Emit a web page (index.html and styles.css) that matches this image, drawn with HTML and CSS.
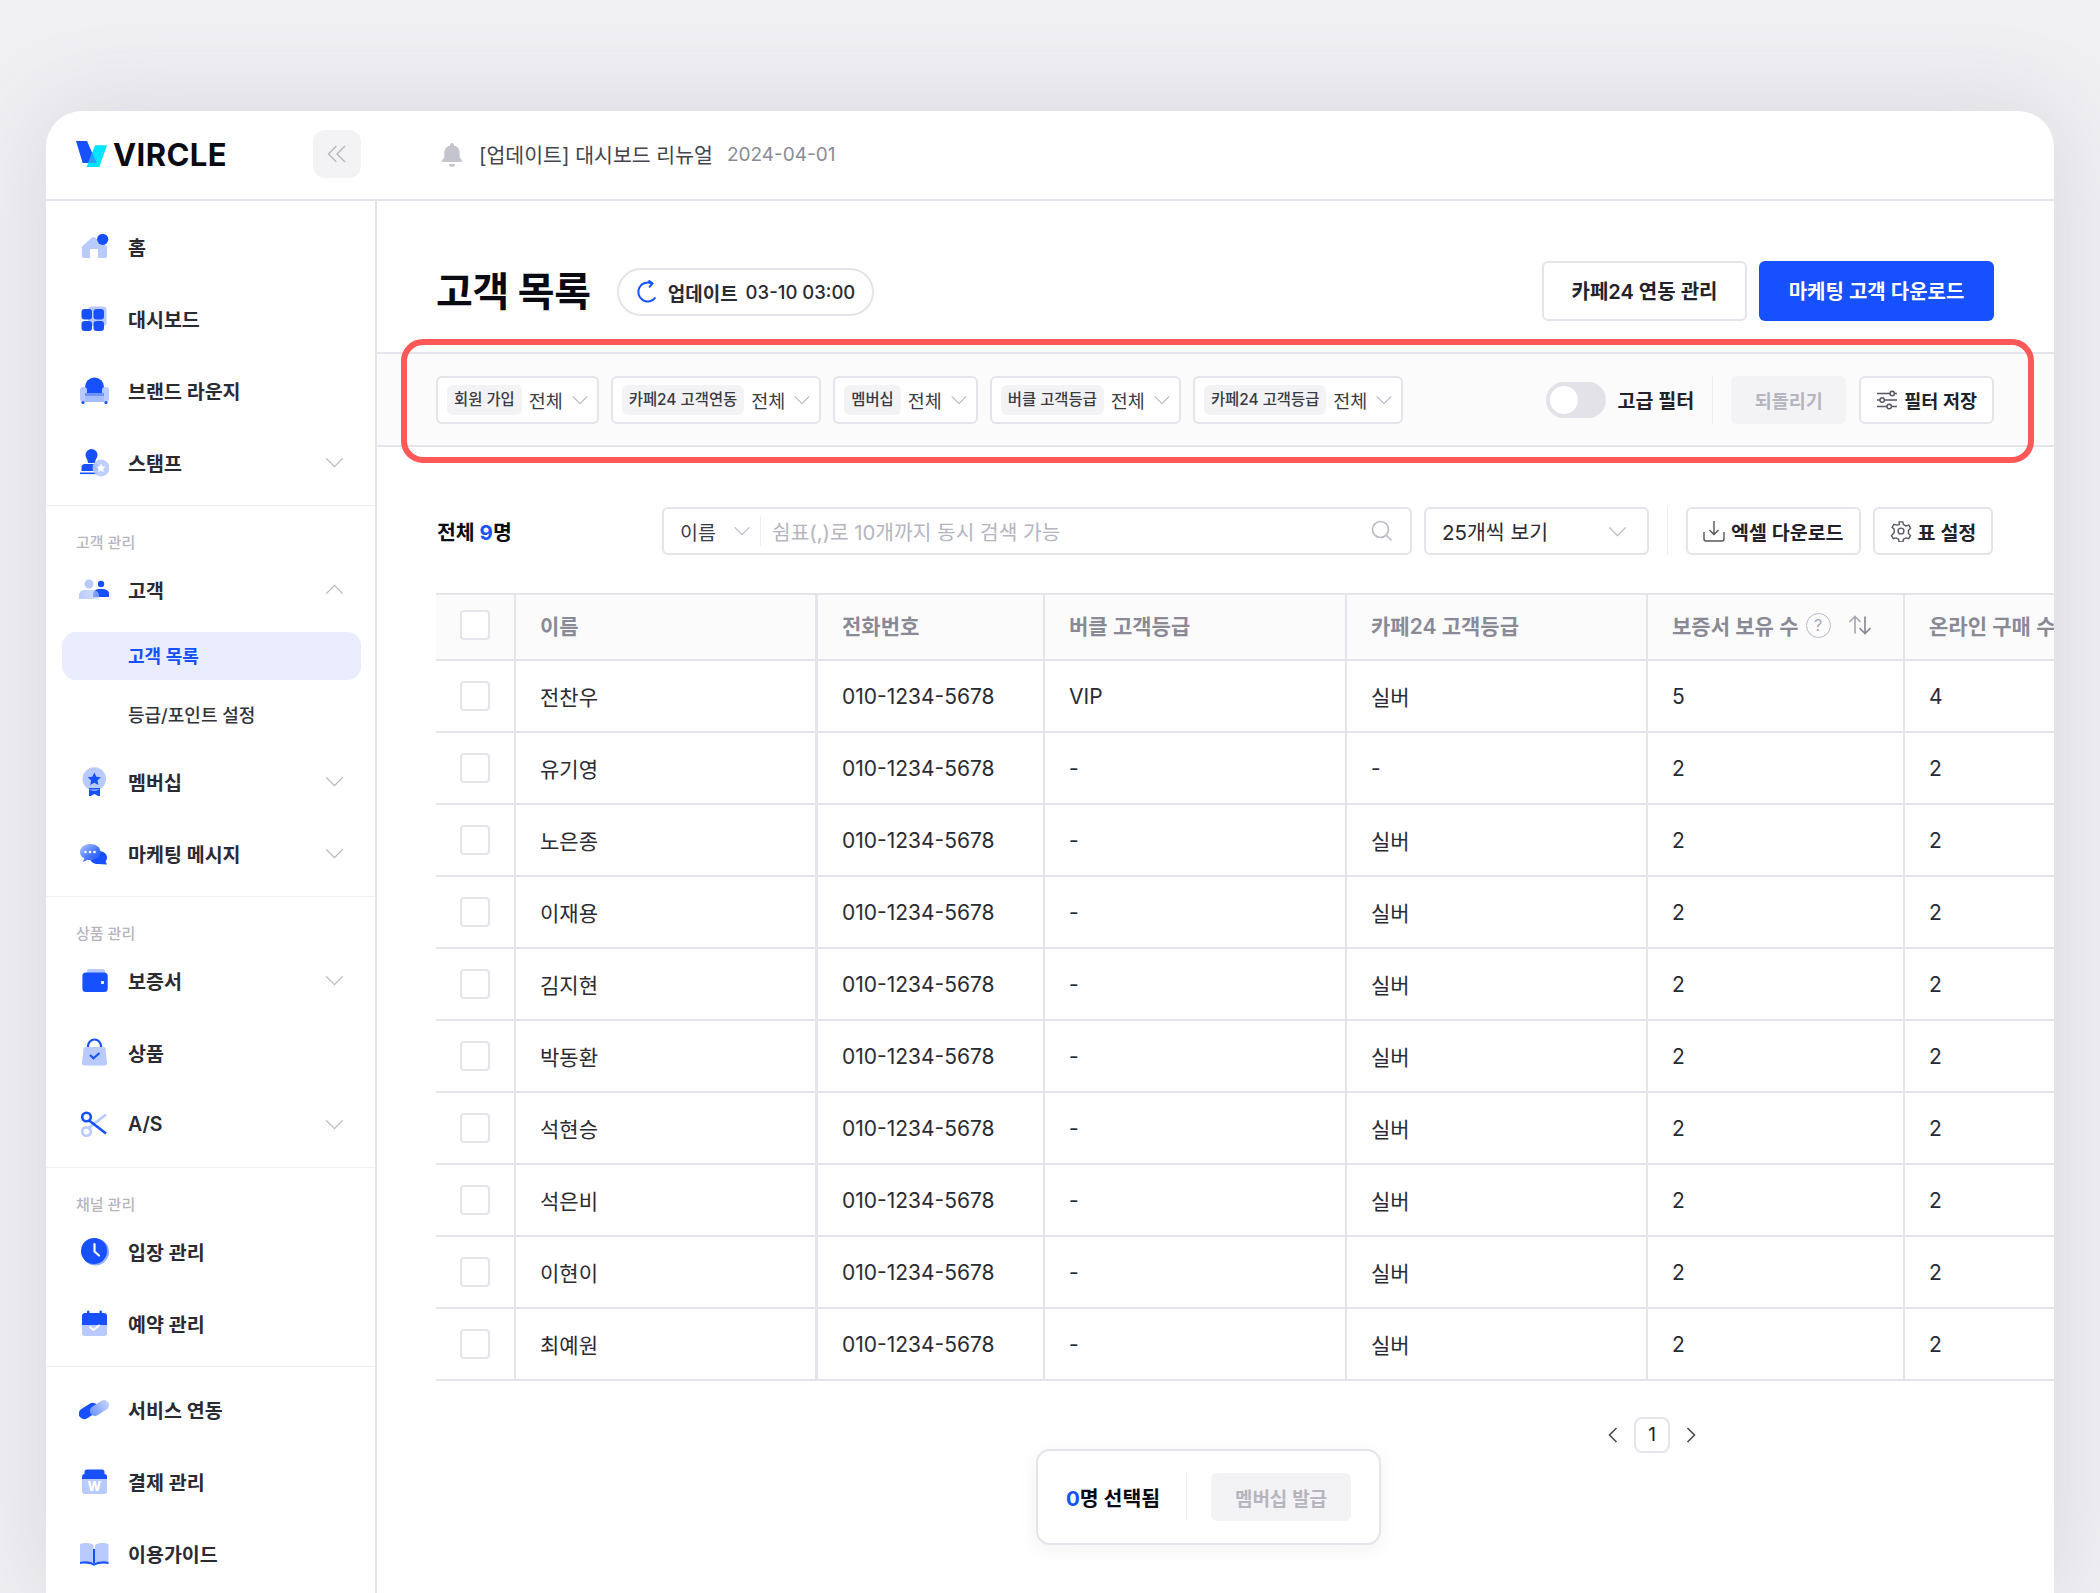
FILE: index.html
```html
<!DOCTYPE html>
<html lang="ko">
<head>
  <meta charset="UTF-8">
  <title>VIRCLE 고객 목록</title>
  <link rel="stylesheet" href="styles.css">
</head>
<body>

<svg class="defs" aria-hidden="true">
  <defs>
    <linearGradient id="fadeBlue" x1="0" y1="0" x2="1" y2="1">
      <stop offset="0" stop-color="#1650ff"/>
      <stop offset="1" stop-color="#b8caff"/>
    </linearGradient>
    <linearGradient id="fadeLight" x1="0" y1="0" x2="1" y2="0">
      <stop offset="0" stop-color="#b8caff"/>
      <stop offset="1" stop-color="#b8caff" stop-opacity=".55"/>
    </linearGradient>
    <linearGradient id="capsule" x1="0" y1="0" x2="1" y2="0">
      <stop offset="0" stop-color="#6f93ff"/>
      <stop offset="1" stop-color="#c4d3ff"/>
    </linearGradient>
    <linearGradient id="bubble" x1="0" y1="0" x2="1" y2="1">
      <stop offset="0" stop-color="#b8caff"/>
      <stop offset=".55" stop-color="#4a78ff"/>
      <stop offset="1" stop-color="#1650ff"/>
    </linearGradient>
  </defs>
</svg>

<div class="app">
  <header class="topbar">
    <div class="brand">
      <div class="logo">
        <svg class="logo-mark" viewBox="0 0 33 27">
          <polygon points="1,0 12,0 21.700,22 7.700,22" fill="#1650ff"/>
          <polygon points="20,4.300 32,4.300 24.300,26 11.700,26" fill="#00e5ff"/>
          <polygon points="17.200,11.700 21.700,22 13.200,22" fill="#2a9dff"/>
        </svg>
        <span class="logo-text">VIRCLE</span>
      </div>
      <button class="collapse">
        <svg width="20" height="20" viewBox="0 0 20 20" fill="none" stroke="#b9b9c6" stroke-width="1.5"><path d="M9.5 2 1.5 10l8 8"/><path d="M18 2l-8 8 8 8"/></svg>
      </button>
    </div>
    <div class="notice">
      <svg width="26" height="26" viewBox="0 0 26 26" fill="#c4c4ce"><path d="M13 2a2 2 0 0 1 2 2v.5c3.6.9 5.7 3.8 5.7 7.5v4.5l2.3 3.2c.3.5 0 1.3-.7 1.3H3.7c-.7 0-1-.8-.7-1.3l2.3-3.2V12c0-3.700 2.100-6.600 5.700-7.500V4a2 2 0 0 1 2-2z"/><path d="M10 23h6a3 3 0 0 1-6 0z"/></svg>
      <span class="notice-text">[업데이트] 대시보드 리뉴얼</span>
      <span class="notice-date">2024-04-01</span>
    </div>
  </header>

  <div class="content">
    <nav class="sidebar">
      <div class="nav-group first">
        <a class="nav-row">
          <svg class="nav-icon" viewBox="0 0 30 30"><path d="M3 15.500 13 6.500a2 2 0 0 1 2.700 0L28 15v10a2 2 0 0 1-2 2h-7v-9h-8v9H5a2 2 0 0 1-2-2z" fill="#b8caff"/><circle cx="23.700" cy="8.300" r="5.600" fill="#1650ff"/></svg>
          <span>홈</span>
        </a>
        <a class="nav-row">
          <svg class="nav-icon" viewBox="0 0 30 30"><rect x="9" y="3.500" width="18.500" height="19.500" rx="3.500" fill="#b8caff"/><rect x="2.500" y="6" width="10.500" height="10.500" rx="3" fill="#1650ff"/><rect x="14.500" y="6" width="10.500" height="10.500" rx="3" fill="#1650ff"/><rect x="2.500" y="18" width="10.500" height="10" rx="3" fill="#1650ff"/><rect x="14.500" y="18" width="10.500" height="10" rx="3" fill="#1650ff"/></svg>
          <span>대시보드</span>
        </a>
        <a class="nav-row">
          <svg class="nav-icon" viewBox="0 0 30 30"><path d="M6 21v-9a9.500 9.500 0 0 1 19 0v9z" fill="#1650ff"/><rect x="1" y="12" width="7" height="15" rx="3" fill="#b8caff"/><rect x="23" y="12" width="7" height="15" rx="3" fill="#b8caff"/><rect x="6" y="18" width="19" height="3" fill="#6f93ff"/><rect x="6" y="21" width="19" height="6" fill="#a5bcff"/><circle cx="4" cy="27.500" r="1.600" fill="#1650ff"/><circle cx="27" cy="27.500" r="1.600" fill="#1650ff"/></svg>
          <span>브랜드 라운지</span>
        </a>
        <a class="nav-row">
          <svg class="nav-icon" viewBox="0 0 30 30"><path d="M12.500 2a6 6 0 0 1 6 6c0 3-2.500 4.500-2.500 8H9c0-3.500-2.500-5-2.500-8a6 6 0 0 1 6-6z" fill="#1650ff"/><path d="M6 17h13v7H2.500v-3.500A3.500 3.500 0 0 1 6 17z" fill="#1650ff"/><rect x="1" y="25.500" width="17" height="1.600" fill="#1650ff"/><circle cx="22" cy="21" r="8.500" fill="#b8caff" fill-opacity=".9"/><path d="m22 16.500 1.400 2.900 3.100.4-2.300 2.200.6 3.100-2.800-1.500-2.800 1.500.6-3.100-2.300-2.200 3.100-.4z" fill="#fff"/></svg>
          <span>스탬프</span>
          <svg class="caret" viewBox="0 0 20 12"><path d="M1 1.500l9 9 9-9"/></svg>
        </a>
      </div>

      <div class="nav-group">
        <div class="nav-label">고객 관리</div>
        <a class="nav-row">
          <svg class="nav-icon" viewBox="0 0 30 30"><circle cx="22" cy="10" r="3.200" fill="#1650ff"/><path d="M14 23v-2.500a5.500 5.500 0 0 1 5.500-5.500h5a6 6 0 0 1 6 6v2z" fill="#1650ff"/><circle cx="10" cy="10" r="4.500" fill="#b8caff"/><path d="M0 25v-3.500A5.500 5.500 0 0 1 5.500 16h9a5.500 5.500 0 0 1 5.500 5.500V25z" fill="url(#fadeLight)"/></svg>
          <span>고객</span>
          <svg class="caret" viewBox="0 0 20 12"><path d="M1 10.500l9-9 9 9"/></svg>
        </a>
        <div class="sub-list">
          <a class="sub-row active">고객 목록</a>
          <a class="sub-row">등급/포인트 설정</a>
        </div>
        <a class="nav-row">
          <svg class="nav-icon" viewBox="0 0 30 30"><path d="M10 19h11v12l-5.500-3-5.500 3z" fill="#1650ff"/><circle cx="15.300" cy="13" r="11.700" fill="#b8caff"/><path d="m15.300 6.500 2 4.200 4.600.6-3.400 3.200.9 4.600-4.100-2.300-4.100 2.300.9-4.600-3.400-3.200 4.600-.6z" fill="#1650ff"/><rect x="10" y="22" width="11" height="1.500" fill="#1650ff"/></svg>
          <span>멤버십</span>
          <svg class="caret" viewBox="0 0 20 12"><path d="M1 1.500l9 9 9-9"/></svg>
        </a>
        <a class="nav-row">
          <svg class="nav-icon" viewBox="0 0 30 30"><path d="M19 26c-5 0-8-2.500-8-6.500S14 13 19 13s9 2.500 9 6.500c0 1.800-.6 3-1.500 4l1.500 3z" fill="#1650ff"/><path d="M11 6c6 0 10.500 3 10.500 8 0 5.500-4.500 8-10.500 8-.8 0-1.600 0-2.400-.2L4 24l1.300-3.800C2.500 19 1 17 1 14c0-5 4.500-8 10-8z" fill="url(#bubble)"/><circle cx="6.500" cy="14" r="1.300" fill="#fff"/><circle cx="11" cy="14" r="1.300" fill="#fff"/><circle cx="15.500" cy="14" r="1.300" fill="#fff"/></svg>
          <span>마케팅 메시지</span>
          <svg class="caret" viewBox="0 0 20 12"><path d="M1 1.500l9 9 9-9"/></svg>
        </a>
      </div>

      <div class="nav-group">
        <div class="nav-label">상품 관리</div>
        <a class="nav-row">
          <svg class="nav-icon" viewBox="0 0 30 30"><rect x="8" y="4" width="18" height="8" rx="2.500" fill="#b8caff"/><rect x="3.400" y="7.500" width="25.300" height="19.500" rx="3.500" fill="#1650ff"/><rect x="22" y="16" width="3" height="3" rx="1" fill="#fff"/></svg>
          <span>보증서</span>
          <svg class="caret" viewBox="0 0 20 12"><path d="M1 1.500l9 9 9-9"/></svg>
        </a>
        <a class="nav-row">
          <svg class="nav-icon" viewBox="0 0 30 30"><path d="M9 12V9a6.500 6.500 0 0 1 13 0v3" fill="none" stroke="#1650ff" stroke-width="2.200"/><path d="M6.500 10h18a2 2 0 0 1 2 1.800l1.500 14a2.500 2.500 0 0 1-2.500 2.700h-20A2.500 2.500 0 0 1 3 25.800l1.500-14A2 2 0 0 1 6.500 10z" fill="#b8caff"/><path d="m11 18 3.500 3.300 6-5.300" fill="none" stroke="#1650ff" stroke-width="2"/></svg>
          <span>상품</span>
        </a>
        <a class="nav-row">
          <svg class="nav-icon" viewBox="0 0 30 30"><path d="M8.500 20 27 5.500" stroke="#b8caff" stroke-width="2.600" fill="none"/><circle cx="7.500" cy="22.500" r="4.300" fill="none" stroke="#b8caff" stroke-width="2.600"/><path d="M9.500 11 27 24.500" stroke="#1650ff" stroke-width="2.600" fill="none"/><circle cx="7.500" cy="8" r="4.300" fill="none" stroke="#1650ff" stroke-width="2.600"/></svg>
          <span>A/S</span>
          <svg class="caret" viewBox="0 0 20 12"><path d="M1 1.500l9 9 9-9"/></svg>
        </a>
      </div>

      <div class="nav-group">
        <div class="nav-label">채널 관리</div>
        <a class="nav-row">
          <svg class="nav-icon" viewBox="0 0 30 30"><circle cx="16.500" cy="16" r="13.500" fill="url(#fadeBlue)"/><circle cx="15" cy="15" r="13" fill="#1650ff"/><path d="M15.500 8v7.500l4.500 4" fill="none" stroke="#fff" stroke-width="2.200" stroke-linecap="round"/></svg>
          <span>입장 관리</span>
        </a>
        <a class="nav-row">
          <svg class="nav-icon" viewBox="0 0 30 30"><rect x="3" y="15" width="25" height="13" rx="3" fill="#b8caff"/><path d="M6 5h19a3 3 0 0 1 3 3v9H3V8a3 3 0 0 1 3-3z" fill="#1650ff"/><rect x="8" y="2.500" width="2.400" height="5" rx="1.200" fill="#1650ff"/><rect x="20.500" y="2.500" width="2.400" height="5" rx="1.200" fill="#1650ff"/><path d="m10.500 18.500 3.800 3.500 6.500-5" fill="none" stroke="#fff" stroke-width="2"/></svg>
          <span>예약 관리</span>
        </a>
      </div>

      <div class="nav-group last">
        <a class="nav-row">
          <svg class="nav-icon" viewBox="0 0 30 30"><rect x="-1" y="11.500" width="21" height="11" rx="5.500" transform="rotate(-32 9.500 17)" fill="#1650ff"/><rect x="10" y="9" width="21" height="10" rx="5" transform="rotate(-32 20.500 14)" fill="url(#capsule)"/></svg>
          <span>서비스 연동</span>
        </a>
        <a class="nav-row">
          <svg class="nav-icon" viewBox="0 0 30 30"><path d="M5.500 11V6a2.500 2.500 0 0 1 2.500-2.500h15A2.500 2.500 0 0 1 25.500 6v5z" fill="#1650ff"/><path d="M6 8h19a3 3 0 0 1 3 3v14a3 3 0 0 1-3 3H6a3 3 0 0 1-3-3V11a3 3 0 0 1 3-3z" fill="#b8caff"/><path d="M3 11a3 3 0 0 1 3-3h19a3 3 0 0 1 3 3v2H3z" fill="#1650ff"/><text x="15.500" y="24.500" class="pay-mark">W</text></svg>
          <span>결제 관리</span>
        </a>
        <a class="nav-row">
          <svg class="nav-icon" viewBox="0 0 30 30"><path d="M1 6c4.500-1.500 9.500-1.500 13.500 1v18C10.500 23 5.500 23 1 24.500z" fill="#b8caff"/><path d="M29.500 6c-4.500-1.500-9.500-1.500-13.500 1v18c4-2 9-2 13.500-.5z" fill="#b8caff"/><path d="M1 24c5-1.500 10-1 14 1.500 4.500-2.500 9.500-3 14.500-1.500v2c-5-1.200-10-.7-14.500 1.800C11 25.500 6 25 1 26z" fill="#1650ff"/><rect x="14" y="11" width="2" height="14" fill="#1650ff"/></svg>
          <span>이용가이드</span>
        </a>
      </div>
    </nav>

    <main class="main">
      <section class="page-head">
        <div class="title-wrap">
          <h1>고객 목록</h1>
          <div class="update-badge">
            <svg width="24" height="24" viewBox="0 0 24 24" fill="none" stroke="#1650ff" stroke-width="2"><path d="M19.500 17.500A9.500 9.500 0 1 1 15.500 3.200"/><path d="M12.500.5l4 3-3.400 3.800"/></svg>
            <b>업데이트</b>
            <span>03-10 03:00</span>
          </div>
        </div>
        <div class="head-actions">
          <button class="btn btn-outline">카페24 연동 관리</button>
          <button class="btn btn-primary">마케팅 고객 다운로드</button>
        </div>
      </section>

      <section class="filter-bar">
        <div class="filter-chips">
          <div class="chip"><span class="chip-label">회원 가입</span><span class="chip-value">전체</span><svg class="caret small" viewBox="0 0 20 12"><path d="M1 1.500l9 9 9-9"/></svg></div>
          <div class="chip"><span class="chip-label">카페24 고객연동</span><span class="chip-value">전체</span><svg class="caret small" viewBox="0 0 20 12"><path d="M1 1.500l9 9 9-9"/></svg></div>
          <div class="chip"><span class="chip-label">멤버십</span><span class="chip-value">전체</span><svg class="caret small" viewBox="0 0 20 12"><path d="M1 1.500l9 9 9-9"/></svg></div>
          <div class="chip"><span class="chip-label">버클 고객등급</span><span class="chip-value">전체</span><svg class="caret small" viewBox="0 0 20 12"><path d="M1 1.500l9 9 9-9"/></svg></div>
          <div class="chip"><span class="chip-label">카페24 고객등급</span><span class="chip-value">전체</span><svg class="caret small" viewBox="0 0 20 12"><path d="M1 1.500l9 9 9-9"/></svg></div>
        </div>
        <div class="filter-tools">
          <div class="toggle"><i></i></div>
          <span class="toggle-label">고급 필터</span>
          <div class="vline"></div>
          <button class="btn-small disabled">되돌리기</button>
          <button class="btn-small">
            <svg width="22" height="22" viewBox="0 0 22 22" fill="none" stroke="#55555f" stroke-width="1.400"><path d="M1 4.500h13M18.500 4.500H21M1 11h3M8.500 11H21M1 17.500h10M15.500 17.500H21"/><circle cx="16.200" cy="4.500" r="2.200"/><circle cx="6.200" cy="11" r="2.200"/><circle cx="13.200" cy="17.500" r="2.200"/></svg>
            필터 저장
          </button>
        </div>
        <div class="highlight"></div>
      </section>

      <section class="list">
        <div class="toolbar">
          <div class="total">전체 <em>9</em>명</div>
          <div class="search">
            <div class="search-type">이름<svg class="caret small" viewBox="0 0 20 12"><path d="M1 1.500l9 9 9-9"/></svg></div>
            <div class="search-input">쉼표(,)로 10개까지 동시 검색 가능</div>
            <svg width="24" height="24" viewBox="0 0 24 24" fill="none" stroke="#b9b9c6" stroke-width="1.600"><circle cx="10.500" cy="10.500" r="8"/><path d="m16.500 16.500 5 5"/></svg>
          </div>
          <div class="page-size">25개씩 보기<svg class="caret" viewBox="0 0 20 12"><path d="M1 1.500l9 9 9-9"/></svg></div>
          <div class="vline"></div>
          <button class="btn-small">
            <svg width="22" height="24" viewBox="0 0 22 24" fill="none" stroke="#55555f" stroke-width="1.400"><path d="M11 2v13M6.500 11l4.500 4.500 4.500-4.500"/><path d="M1 13v7a2 2 0 0 0 2 2h16a2 2 0 0 0 2-2v-7"/></svg>
            엑셀 다운로드
          </button>
          <button class="btn-small">
            <svg width="22" height="22" viewBox="0 0 24 24" fill="none" stroke="#55555f" stroke-width="1.500"><circle cx="12" cy="12" r="3.200"/><path d="M10 2h4l.7 3 2.700 1.500 3-.9 2 3.400-2.300 2.200v3.600l2.300 2.200-2 3.400-3-.9-2.700 1.500-.7 3h-4l-.7-3-2.700-1.500-3 .9-2-3.400L4.600 13.800v-3.600L2.300 8l2-3.400 3 .9L10 4.999z"/></svg>
            표 설정
          </button>
        </div>

        <table class="customers">
          <colgroup>
            <col class="c-check"><col class="c-name"><col class="c-phone"><col class="c-grade"><col class="c-cafe"><col class="c-count"><col class="c-online">
          </colgroup>
          <thead>
            <tr>
              <th><span class="check"></span></th>
              <th class="wall">이름</th>
              <th>전화번호</th>
              <th>버클 고객등급</th>
              <th>카페24 고객등급</th>
              <th>
                <div class="th-sort">
                  보증서 보유 수
                  <span class="help">?</span>
                  <svg width="24" height="20" viewBox="0 0 24 20" fill="none" stroke="#a9a9b6" stroke-width="1.700"><path d="M7 18.500V2M1.500 7 7 1.500 12.500 7"/><path d="M17 1.500V18M11.500 13l5.500 5.500 5.500-5.500" stroke="#8a8a96"/></svg>
                </div>
              </th>
              <th>온라인 구매 수</th>
            </tr>
          </thead>
          <tbody>
            <tr><td><span class="check"></span></td><td class="wall">전찬우</td><td>010-1234-5678</td><td>VIP</td><td>실버</td><td>5</td><td>4</td></tr>
            <tr><td><span class="check"></span></td><td class="wall">유기영</td><td>010-1234-5678</td><td>-</td><td>-</td><td>2</td><td>2</td></tr>
            <tr><td><span class="check"></span></td><td class="wall">노은종</td><td>010-1234-5678</td><td>-</td><td>실버</td><td>2</td><td>2</td></tr>
            <tr><td><span class="check"></span></td><td class="wall">이재용</td><td>010-1234-5678</td><td>-</td><td>실버</td><td>2</td><td>2</td></tr>
            <tr><td><span class="check"></span></td><td class="wall">김지현</td><td>010-1234-5678</td><td>-</td><td>실버</td><td>2</td><td>2</td></tr>
            <tr><td><span class="check"></span></td><td class="wall">박동환</td><td>010-1234-5678</td><td>-</td><td>실버</td><td>2</td><td>2</td></tr>
            <tr><td><span class="check"></span></td><td class="wall">석현승</td><td>010-1234-5678</td><td>-</td><td>실버</td><td>2</td><td>2</td></tr>
            <tr><td><span class="check"></span></td><td class="wall">석은비</td><td>010-1234-5678</td><td>-</td><td>실버</td><td>2</td><td>2</td></tr>
            <tr><td><span class="check"></span></td><td class="wall">이현이</td><td>010-1234-5678</td><td>-</td><td>실버</td><td>2</td><td>2</td></tr>
            <tr><td><span class="check"></span></td><td class="wall">최예원</td><td>010-1234-5678</td><td>-</td><td>실버</td><td>2</td><td>2</td></tr>
          </tbody>
        </table>

        <div class="pager">
          <svg width="12" height="18" viewBox="0 0 12 18" fill="none" stroke="#44444c" stroke-width="1.500"><path d="M9.500 2 2.500 9l7 7"/></svg>
          <span class="page-num">1</span>
          <svg width="12" height="18" viewBox="0 0 12 18" fill="none" stroke="#44444c" stroke-width="1.500"><path d="m2.500 2 7 7-7 7"/></svg>
        </div>
      </section>

      <div class="select-card">
        <div class="select-count"><em>0</em>명 선택됨</div>
        <div class="vline"></div>
        <button class="btn-small disabled wide">멤버십 발급</button>
      </div>
    </main>
  </div>
</div>

</body>
</html>
```

FILE: styles.css
```css
* {
  box-sizing: border-box;
}
html, body {
  margin: 0;
  height: 1593px;
  overflow: hidden;
}
body {
  padding: 111px 46px 0;
  background: #f0f0f3;
  font-family: Inter, "Noto Sans CJK KR", sans-serif;
  color: #22222a;
}
button {
  font-family: inherit;
}
em {
  font-style: normal;
  color: #1650ff;
}
.defs {
  position: absolute;
  width: 0;
  height: 0;
}
.app {
  height: 1482px;
  background: #fff;
  border-radius: 36px 36px 0 0;
  overflow: hidden;
  display: flex;
  flex-direction: column;
  box-shadow: 0 0 90px rgba(110, 110, 140, .2);
}

/* top bar */
.topbar {
  height: 90px;
  flex: none;
  display: flex;
  padding-bottom: 2px;
  border-bottom: 2px solid #e4e4ea;
}
.brand {
  width: 331px;
  display: flex;
  align-items: center;
  justify-content: space-between;
  padding: 0 16px 0 29px;
}
.logo {
  display: flex;
  align-items: center;
  gap: 5px;
}
.logo-mark {
  width: 33px;
  height: 27px;
}
.logo-text {
  font-size: 31px;
  font-weight: 700;
  line-height: 1;
  color: #0a0a12;
  letter-spacing: .4px;
}
.collapse {
  width: 48px;
  height: 48px;
  border: 0;
  border-radius: 12px;
  background: #f3f3f6;
  display: flex;
  align-items: center;
  justify-content: center;
  padding: 0;
}
.notice {
  display: flex;
  align-items: center;
  padding-left: 62px;
}
.notice-text {
  margin-left: 14px;
  font-size: 20.500px;
  color: #44444c;
}
.notice-date {
  margin-left: 14px;
  font-size: 19px;
  color: #8a8a96;
}

.content {
  flex: 1;
  min-height: 0;
  display: flex;
}

/* sidebar */
.sidebar {
  width: 331px;
  flex: none;
  border-right: 2px solid #e4e4ea;
}
.nav-group {
  padding-bottom: 7px;
  border-bottom: 1px solid #f0f0f3;
}
.nav-group.first {
  padding-top: 9px;
}
.nav-group.last {
  padding-top: 6px;
  border-bottom: 0;
}
.nav-label {
  padding: 26px 0 0 30px;
  font-size: 15px;
  line-height: 21px;
  font-weight: 500;
  color: #b5b5c0;
}
.nav-row {
  height: 72px;
  display: flex;
  align-items: center;
  padding: 0 31px 0 33px;
  font-size: 19.500px;
  font-weight: 600;
  color: #2a2a32;
}
.nav-icon {
  width: 30px;
  height: 30px;
  margin-right: 19px;
  flex: none;
}
.caret {
  width: 19px;
  height: 11px;
  margin-left: auto;
  fill: none;
  stroke: #b9b9c6;
  stroke-width: 1.500;
  flex: none;
}
.caret.small {
  width: 16px;
  height: 10px;
}
.pay-mark {
  font-size: 13px;
  font-weight: 800;
  fill: #fff;
  text-anchor: middle;
}
.sub-list {
  padding: 7px 14px 6px 16px;
  display: flex;
  flex-direction: column;
  gap: 11px;
}
.sub-row {
  height: 48px;
  line-height: 50px;
  padding-left: 66px;
  border-radius: 14px;
  font-size: 18px;
  font-weight: 500;
  color: #33333b;
}
.sub-row.active {
  background: #e9edfe;
  color: #1650ff;
  font-weight: 600;
}

/* main */
.main {
  flex: 1;
  min-width: 0;
  position: relative;
  overflow: hidden;
}
.page-head {
  display: flex;
  align-items: center;
  justify-content: space-between;
  padding: 61px 60px 30px 59px;
}
.title-wrap {
  display: flex;
  align-items: center;
  gap: 26px;
}
h1 {
  margin: 0;
  font-size: 40px;
  line-height: 60px;
  font-weight: 700;
  letter-spacing: -.4px;
  color: #0a0a12;
}
.update-badge {
  height: 48px;
  display: flex;
  align-items: center;
  padding: 0 17px;
  border: 2px solid #e4e4ea;
  border-radius: 24px;
  font-size: 19px;
  color: #2a2a32;
}
.update-badge b {
  margin-left: 8px;
  font-weight: 600;
}
.update-badge span {
  margin-left: 8px;
  font-size: 18.500px;
  font-weight: 500;
}
.head-actions {
  display: flex;
  gap: 12px;
  margin-top: -2px;
}
.btn {
  height: 60px;
  padding-bottom: 3px;
  border-radius: 6px;
  font-size: 20px;
  font-weight: 600;
}
.btn-outline {
  width: 205px;
  background: #fff;
  border: 2px solid #e4e4ea;
  color: #22222a;
}
.btn-primary {
  width: 235px;
  background: #1650ff;
  border: 0;
  color: #fff;
}

/* filter bar */
.filter-bar {
  position: relative;
  height: 95px;
  display: flex;
  align-items: center;
  justify-content: space-between;
  padding: 0 60px 0 59px;
  background: #fbfbfc;
  border-top: 2px solid #e4e4ea;
  border-bottom: 2px solid #e4e4ea;
}
.filter-chips {
  display: flex;
  gap: 12px;
}
.chip {
  height: 48px;
  display: flex;
  align-items: center;
  padding: 0 9px;
  background: #fff;
  border: 2px solid #e4e4ea;
  border-radius: 6px;
}
.chip-label {
  height: 30px;
  line-height: 30px;
  padding: 0 7px;
  background: #f3f3f6;
  border-radius: 6px;
  font-size: 15.400px;
  font-weight: 500;
  color: #3a3a42;
}
.chip-value {
  margin: 0 9px 0 7px;
  font-size: 18.500px;
  color: #3a3a42;
}
.chip .caret {
  margin-left: 0;
}
.filter-tools {
  display: flex;
  align-items: center;
}
.toggle {
  width: 60px;
  height: 36px;
  border-radius: 18px;
  background: #e2e2e8;
  padding: 4px;
}
.toggle i {
  display: block;
  width: 28px;
  height: 28px;
  border-radius: 50%;
  background: #fff;
}
.toggle-label {
  margin-left: 12px;
  font-size: 19.500px;
  font-weight: 600;
}
.vline {
  width: 1px;
  height: 48px;
  background: #eeeef2;
  flex: none;
}
.filter-tools .vline {
  margin: 0 18px;
}
.btn-small {
  height: 48px;
  padding: 0 15px;
  display: flex;
  align-items: center;
  justify-content: center;
  gap: 6px;
  background: #fff;
  border: 2px solid #e4e4ea;
  border-radius: 6px;
  font-size: 18.500px;
  font-weight: 600;
  color: #22222a;
}
.btn-small.disabled {
  width: 115px;
  background: #f3f3f6;
  border-color: #f3f3f6;
  color: #b5b5c0;
  margin-right: 13px;
}
.btn-small.wide {
  width: 142px;
  margin-right: 0;
  font-size: 19px;
  padding: 0;
}
.highlight {
  position: absolute;
  left: 24px;
  right: 20px;
  top: -15px;
  bottom: -18px;
  border: 6px solid #ff5858;
  border-radius: 22px;
}

/* list */
.list {
  padding: 60px 60px 0 59px;
}
.toolbar {
  height: 48px;
  display: flex;
  align-items: center;
  gap: 12px;
}
.toolbar .btn-small {
  font-size: 19.500px;
  flex: none;
}
.total {
  width: 214px;
  padding-left: 1px;
  font-size: 20.500px;
  font-weight: 700;
  color: #0a0a12;
}
.search {
  width: 750px;
  height: 48px;
  display: flex;
  align-items: center;
  padding-right: 16px;
  border: 2px solid #e4e4ea;
  border-radius: 6px;
}
.search-type {
  width: 97px;
  height: 30px;
  display: flex;
  align-items: center;
  padding: 0 10px 0 16px;
  border-right: 1px solid #eeeef2;
  font-size: 19.500px;
  color: #3a3a42;
}
.search-input {
  flex: 1;
  padding-left: 11px;
  font-size: 20.300px;
  color: #b5b5c0;
}
.page-size {
  width: 225px;
  height: 48px;
  display: flex;
  align-items: center;
  padding: 0 20px 0 16px;
  border: 2px solid #e4e4ea;
  border-radius: 6px;
  font-size: 20.500px;
  color: #2a2a32;
}
.toolbar .vline {
  margin: 0 6px;
}

/* table */
.customers {
  width: 1668px;
  margin-top: 38px;
  table-layout: fixed;
  border-collapse: separate;
  border-spacing: 0;
  font-size: 21px;
}
.c-check { width: 80px; }
.c-name { width: 302px; }
.c-phone { width: 227px; }
.c-grade { width: 302px; }
.c-cafe { width: 301px; }
.c-count { width: 257px; }
.c-online { width: 199px; }
.customers th, .customers td {
  padding: 0 0 0 24px;
  border-right: 2px solid #e4e4ea;
  border-bottom: 2px solid #e4e4ea;
  text-align: left;
}
.customers th {
  height: 68px;
  padding-bottom: 4px;
  background: #fbfbfc;
  border-top: 2px solid #e4e4ea;
  font-weight: 600;
  color: #8a8a96;
  white-space: nowrap;
}
.customers td {
  height: 72px;
  color: #2a2a32;
}
.customers .wall {
  border-right-width: 3px;
}
.check {
  display: block;
  width: 30px;
  height: 30px;
  background: #fff;
  border: 2px solid #e4e4ea;
  border-radius: 4px;
}
.th-sort {
  display: flex;
  align-items: center;
}
.help {
  width: 25px;
  height: 25px;
  margin: 0 17px 0 7px;
  border: 1.500px solid #b9b9c6;
  border-radius: 50%;
  font-size: 16px;
  font-weight: 400;
  line-height: 22px;
  text-align: center;
  color: #a9a9b6;
}

/* bottom */
.pager {
  margin: 36px 297px 0 0;
  display: flex;
  justify-content: flex-end;
  align-items: center;
  gap: 15px;
}
.page-num {
  width: 36px;
  height: 36px;
  line-height: 32px;
  text-align: center;
  border: 2px solid #e4e4ea;
  border-radius: 8px;
  font-size: 19px;
}
.select-card {
  position: absolute;
  left: 659px;
  top: 1248px;
  width: 345px;
  height: 96px;
  display: flex;
  align-items: center;
  padding: 0 28px 0 28px;
  background: #fff;
  border: 2px solid #e4e4ea;
  border-radius: 14px;
  box-shadow: 0 4px 20px rgba(30, 30, 60, .06);
}
.select-count {
  width: 120px;
  flex: none;
  font-size: 20.500px;
  font-weight: 700;
  color: #0a0a12;
}
.select-card .vline {
  margin-right: 24px;
}
```
